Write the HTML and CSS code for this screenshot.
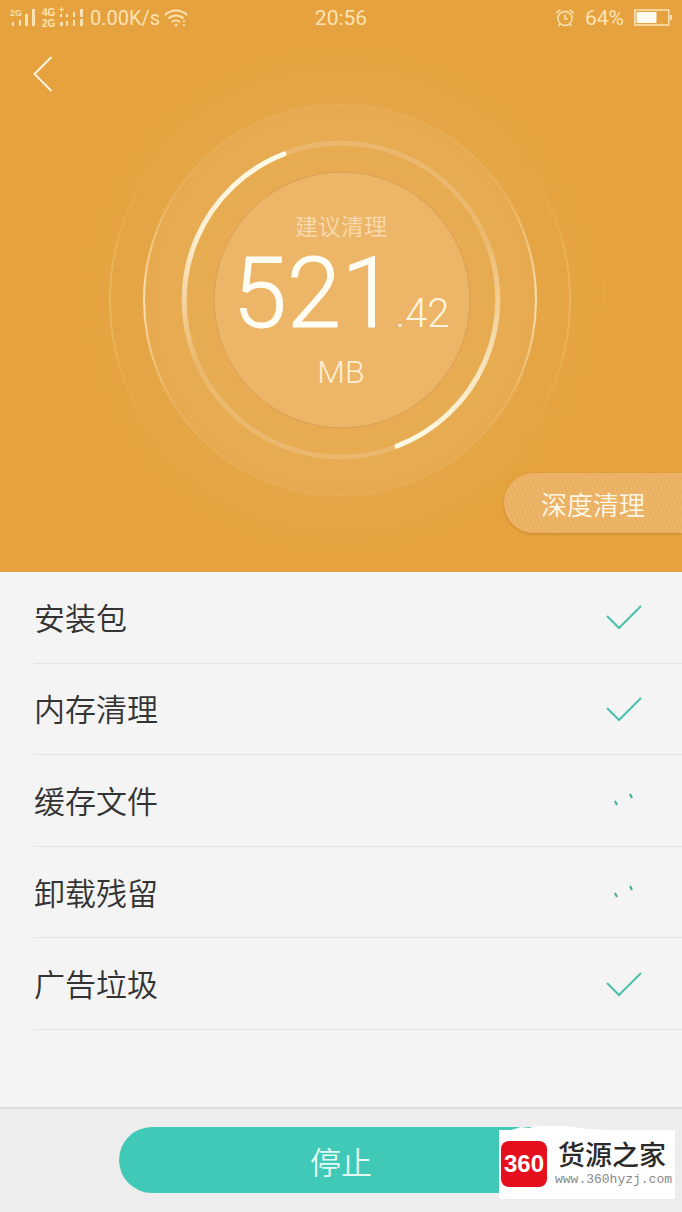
FILE: index.html
```html
<!DOCTYPE html>
<html lang="zh">

<head>
    <meta charset="UTF-8">
    <meta name="viewport" content="width=device-width, initial-scale=1.0">
    <title>建议清理</title>
    <link rel="stylesheet" href="styles.css">
</head>

<body>
    <div class="page">
        <div class="hero">
            <!-- 状态栏 -->
            <div class="status-bar">
                <div class="status-left">
                    <svg class="signal" width="76" height="24" viewBox="0 0 76 24" fill="currentColor">
                        <text x="0" y="10" font-size="9">2G</text>
                        <rect x="2" y="16" width="2" height="4" />
                        <rect x="9" y="14" width="2" height="6" />
                        <rect x="15" y="8" width="3" height="12" />
                        <rect x="22" y="3" width="3" height="17" />
                        <text x="32" y="10" font-size="10">4G</text>
                        <path d="M49 3h2v-2h1v2h2v1h-2v2h-1v-2h-2z" />
                        <text x="32" y="21" font-size="10">2G</text>
                        <rect x="50" y="8" width="2" height="3" />
                        <rect x="50" y="16" width="3" height="4" />
                        <rect x="56" y="8" width="2" height="3" />
                        <rect x="56" y="15" width="2" height="5" />
                        <rect x="63" y="6" width="2" height="5" />
                        <rect x="63" y="14" width="2" height="6" />
                        <rect x="70" y="3" width="3" height="8" />
                        <rect x="70" y="13" width="3" height="7" />
                    </svg>
                    <span class="speed">0.00K/s</span>
                    <svg width="24" height="20" viewBox="0 0 24 20" fill="none" stroke="currentColor" stroke-width="2">
                        <path d="M1 7a16 16 0 0 1 22 0M4.500 10.500a11 11 0 0 1 15 0M8 14a6 6 0 0 1 8 0" />
                        <circle cx="12" cy="17" r="1.500" fill="currentColor" stroke="none" />
                        <path d="M20 12v2M20 16v2" stroke-width="1.500" />
                    </svg>
                </div>
                <span class="clock">20:56</span>
                <div class="status-right">
                    <svg width="20" height="20" viewBox="0 0 20 20" fill="none" stroke="currentColor" stroke-width="1.500">
                        <circle cx="10" cy="10.500" r="7" />
                        <path d="M10 6.500v4.500h3M1.500 5.500A9 9 0 0 1 5.500 2M14.500 2a9 9 0 0 1 4 3.500M5 16l-1.500 2M15 16l1.500 2" />
                    </svg>
                    <span class="clock">64%</span>
                    <svg width="38" height="18" viewBox="0 0 38 18">
                        <rect x="0.750" y="1" width="34" height="15" fill="none" stroke="currentColor" stroke-width="1.500" />
                        <rect x="2.500" y="3" width="20" height="11" fill="#fffaf0" />
                        <path d="M36 6h2v5h-2z" fill="currentColor" />
                    </svg>
                </div>
            </div>

            <button class="back" type="button" aria-label="返回">
                <svg width="20" height="36" viewBox="0 0 20 36" fill="none" stroke="#fff5df" stroke-width="2">
                    <path d="M18.500 1L1.500 18L18.500 35" />
                </svg>
            </button>

            <!-- 圆形仪表 -->
            <div class="dial">
                <svg class="rings" viewBox="0 0 528 528" fill="none">
                    <defs>
                        <linearGradient id="side" x1="0" y1="0" x2="0" y2="1">
                            <stop offset="0" stop-color="#fff0d0" stop-opacity="0.050" />
                            <stop offset="0.250" stop-color="#fff0d0" stop-opacity="0.150" />
                            <stop offset="0.500" stop-color="#fff0d0" stop-opacity="0.800" />
                            <stop offset="0.750" stop-color="#fff0d0" stop-opacity="0.150" />
                            <stop offset="1" stop-color="#fff0d0" stop-opacity="0.050" />
                        </linearGradient>
                        <linearGradient id="arc-top" gradientUnits="userSpaceOnUse" x1="0" y1="116" x2="0" y2="330">
                            <stop offset="0" stop-color="#fffbe8" />
                            <stop offset="0.400" stop-color="#fff4da" stop-opacity="0.900" />
                            <stop offset="1" stop-color="#fff4da" stop-opacity="0" />
                        </linearGradient>
                        <linearGradient id="arc-bottom" gradientUnits="userSpaceOnUse" x1="0" y1="412" x2="0" y2="198">
                            <stop offset="0" stop-color="#fffbe8" />
                            <stop offset="0.400" stop-color="#fff4da" stop-opacity="0.700" />
                            <stop offset="1" stop-color="#fff4da" stop-opacity="0" />
                        </linearGradient>
                        <radialGradient id="glow">
                            <stop offset="0" stop-color="#fff" stop-opacity="0.080" />
                            <stop offset="0.700" stop-color="#fff" stop-opacity="0.050" />
                            <stop offset="1" stop-color="#fff" stop-opacity="0" />
                        </radialGradient>
                    </defs>
                    <circle cx="264" cy="264" r="264" fill="url(#glow)" />
                    <circle cx="264" cy="264" r="263" stroke="url(#side)" stroke-opacity="0.060" stroke-width="2" />
                    <circle cx="263" cy="264" r="230" stroke="url(#side)" stroke-opacity="0.300" stroke-width="2" />
                    <circle cx="263" cy="264" r="196" fill="#fff" fill-opacity="0.050" stroke="url(#side)" stroke-width="2" />
                    <circle cx="264" cy="264" r="157" stroke="#fff" stroke-opacity="0.160" stroke-width="5" />
                    <path d="M207 118A157 157 0 0 0 119 324" stroke="url(#arc-top)" stroke-width="5" stroke-linecap="round" />
                    <path d="M320 410A157 157 0 0 0 409 204" stroke="url(#arc-bottom)" stroke-width="5" stroke-linecap="round" />
                    <circle cx="265" cy="264" r="128" fill="#ecb567" stroke="#d9a054" stroke-width="1" />
                </svg>
                <div class="readout">
                    <div class="readout-label">建议清理</div>
                    <div class="readout-value">521<span class="decimal">.42</span></div>
                    <div class="readout-unit">MB</div>
                </div>
            </div>

            <button class="deep-clean" type="button">深度清理</button>
        </div>

        <!-- 扫描项目 -->
        <ul class="scan-list">
            <li class="scan-item">
                <span>安装包</span>
                <svg class="state" viewBox="0 0 36 32"><path d="M1 16L13 28L35 6" /></svg>
            </li>
            <li class="scan-item">
                <span>内存清理</span>
                <svg class="state" viewBox="0 0 36 32"><path d="M1 16L13 28L35 6" /></svg>
            </li>
            <li class="scan-item">
                <span>缓存文件</span>
                <svg class="state loading" viewBox="0 0 36 32"><path d="M9 18L11 22M24 11L26 15" /></svg>
            </li>
            <li class="scan-item">
                <span>卸载残留</span>
                <svg class="state loading" viewBox="0 0 36 32"><path d="M9 18L11 22M24 11L26 15" /></svg>
            </li>
            <li class="scan-item">
                <span>广告垃圾</span>
                <svg class="state" viewBox="0 0 36 32"><path d="M1 16L13 28L35 6" /></svg>
            </li>
        </ul>

        <div class="footer">
            <button class="stop" type="button">停止</button>
            <!-- 站点水印 -->
            <div class="watermark">
                <svg class="brush" width="176" height="4" viewBox="0 0 176 4" fill="#fff">
                    <path d="M12 4L22 1L30 2L38 0L66 0L90 3L110 4z" />
                </svg>
                <div class="site-logo">360</div>
                <div class="site-text">
                    <div class="site-name">货源之家</div>
                    <div class="site-url">www.360hyzj.com</div>
                </div>
            </div>
        </div>
    </div>
</body>

</html>
```
FILE: styles.css
```css
/* 基础样式 */
* {
    box-sizing: border-box;
}

body {
    margin: 0;
    background-color: #f4f4f4;
    font-family: Roboto, "Noto Sans CJK SC", sans-serif;
    font-weight: 350;
}

button {
    border: none;
    padding: 0;
    font-family: inherit;
    font-weight: inherit;
    cursor: pointer;
}

svg {
    display: block;
}

.page {
    display: flex;
    flex-direction: column;
    min-height: 100vh;
}

/* 顶部区域 */
.hero {
    position: relative;
    background-color: #e5a23e;
    padding-bottom: 8px;
}

/* 状态栏 */
.status-bar {
    display: grid;
    grid-template-columns: 1fr auto 1fr;
    align-items: center;
    height: 36px;
    padding: 0 10px;
    font-weight: 400;
    color: #fde3b4;
}

.status-left,
.status-right {
    display: flex;
    align-items: center;
    gap: 4px;
}

.status-right {
    justify-content: flex-end;
    gap: 10px;
}

.signal {
    font-family: "Liberation Sans", sans-serif;
    font-weight: bold;
}

.speed {
    font-size: 20px;
}

.clock {
    font-size: 21px;
}

/* 返回按钮 */
.back {
    position: absolute;
    top: 48px;
    left: 25px;
    padding: 8px;
    background: none;
}

/* 圆形仪表 */
.dial {
    display: grid;
    place-items: center;
}

.rings,
.readout {
    grid-area: 1 / 1;
}

.rings {
    width: 100%;
    max-width: 528px;
}

.readout {
    display: flex;
    flex-direction: column;
    align-items: center;
    padding-top: 12px;
    color: #fffdf4;
}

.readout-label {
    font-size: 23px;
    line-height: 32px;
    color: #f8dcb0;
}

.readout-value {
    font-size: 98px;
    line-height: 100px;
    -webkit-text-stroke: 1px #fffdf4;
}

.decimal {
    font-size: 40px;
    line-height: 40px;
    color: #fff5df;
    -webkit-text-stroke: 0;
}

.readout-unit {
    font-size: 32px;
    line-height: 56px;
    color: #fff0d4;
}

/* 深度清理按钮 */
.deep-clean {
    position: absolute;
    right: 0;
    bottom: 39px;
    height: 60px;
    padding: 0 37px;
    border-radius: 30px 0 0 30px;
    background: repeating-linear-gradient(70deg, #eab061 0 2px, #ecb56a 2px 4px);
    box-shadow: 0 1px 3px rgba(160, 95, 10, 0.4);
    font-size: 26px;
    color: #fff8e8;
}

/* 扫描列表 */
.scan-list {
    display: grid;
    grid-auto-rows: 1fr;
    min-height: 458px;
    margin: 0 0 0 34px;
    padding: 0;
    list-style: none;
}

.scan-item {
    display: flex;
    justify-content: space-between;
    align-items: center;
    padding: 0 40px 2px 0;
    border-bottom: 1px solid #e3e3e3;
    font-size: 31px;
    color: #333;
}

.state {
    width: 36px;
    height: 32px;
    fill: none;
    stroke: #4cc0ac;
    stroke-width: 2;
}

.loading {
    stroke: #3fae93;
}

/* 底部操作栏 */
.footer {
    position: relative;
    display: flex;
    justify-content: center;
    margin-top: auto;
    padding: 18px 0 19px;
    border-top: 2px solid #dcdcdc;
    background-color: #ededed;
}

.stop {
    width: 65%;
    height: 66px;
    border-radius: 33px;
    background-color: #40c9b7;
    font-size: 31px;
    color: #e4fbf5;
}

/* 站点水印 */
.watermark {
    position: absolute;
    right: 7px;
    bottom: 13px;
    display: flex;
    align-items: center;
    gap: 8px;
    width: 176px;
    height: 69px;
    padding: 0 2px 2px;
    background-color: #fff;
}

.brush {
    position: absolute;
    left: 0;
    bottom: 100%;
}

.site-logo {
    flex-shrink: 0;
    width: 46px;
    height: 46px;
    border-radius: 8px;
    background-color: #e60f1e;
    font-family: "Liberation Sans", sans-serif;
    font-size: 24px;
    font-weight: bold;
    line-height: 46px;
    text-align: center;
    color: #fff;
}

.site-name {
    padding-left: 3px;
    font-size: 27px;
    font-weight: 500;
    line-height: 32px;
    color: #2b2b2b;
}

.site-url {
    font-family: "Liberation Mono", monospace;
    font-size: 13px;
    line-height: 16px;
    color: #888;
}
```
